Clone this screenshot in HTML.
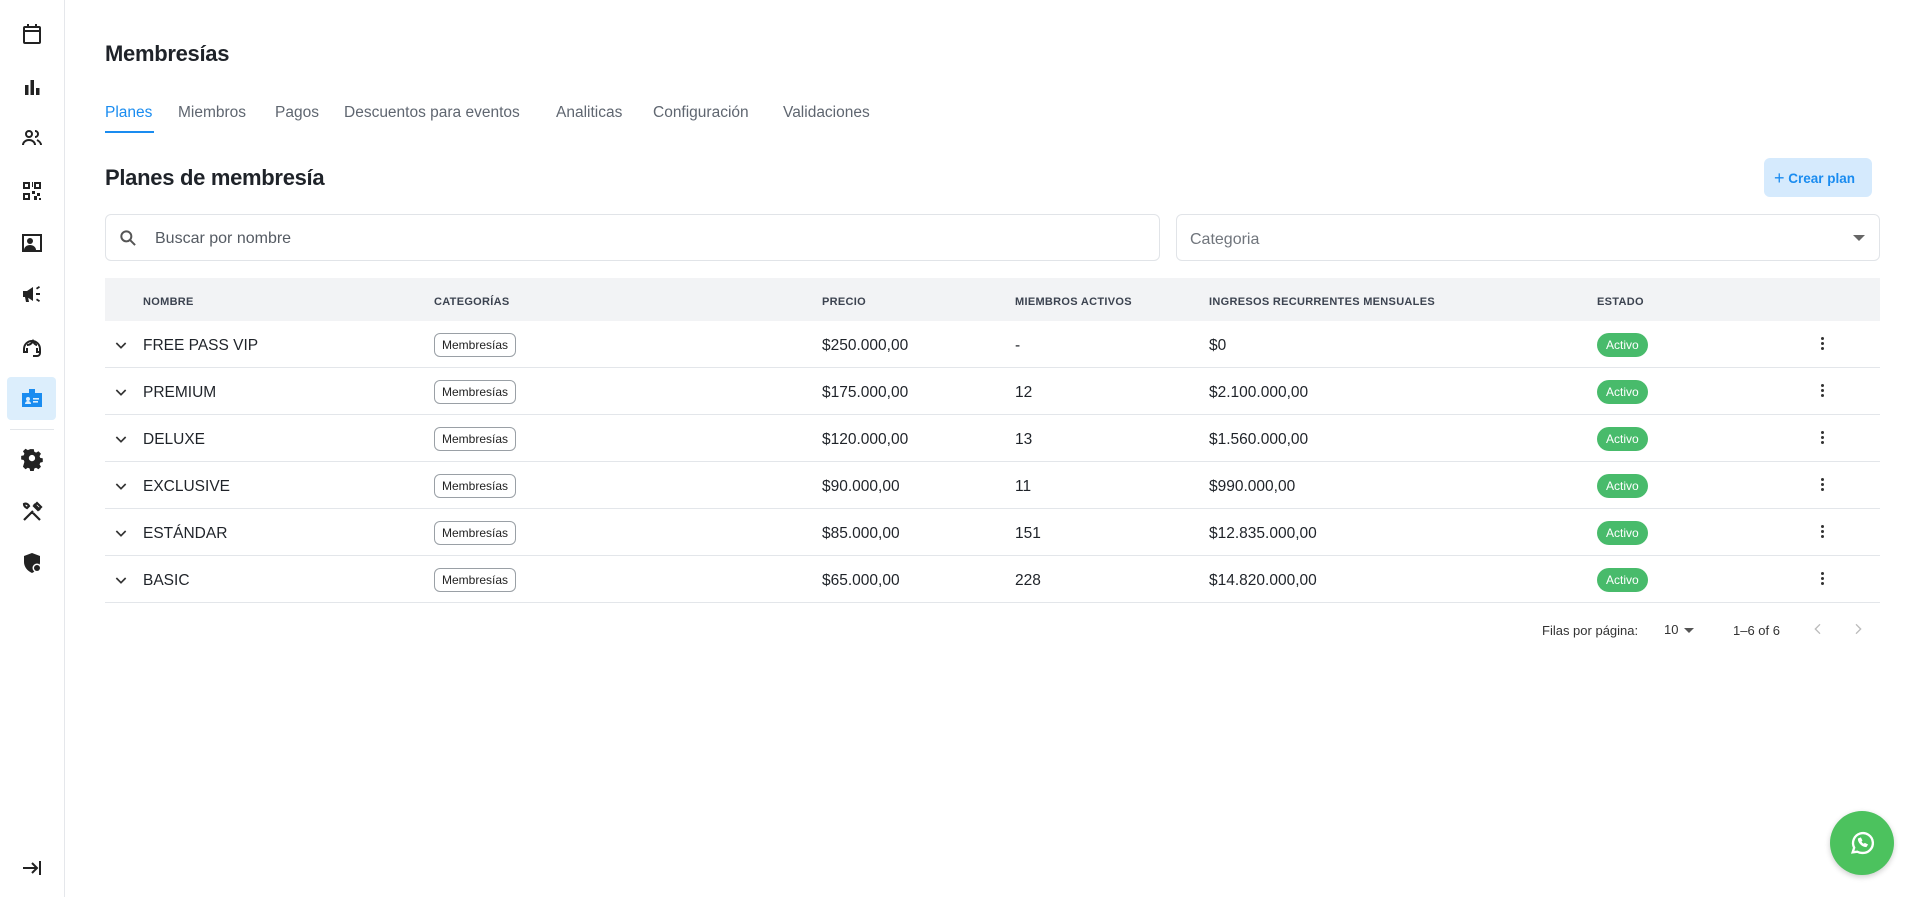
<!DOCTYPE html>
<html><head><meta charset="utf-8"><style>
*{box-sizing:border-box;margin:0;padding:0}
body{width:1915px;height:897px;background:#fff;font-family:"Liberation Sans",sans-serif;color:#1f2329;position:relative;overflow:hidden}
.side{position:absolute;left:0;top:0;width:65px;height:897px;border-right:1px solid #e5e7eb}
.ic{position:absolute;left:20px;width:24px;height:24px}
.abs{position:absolute}
.tab{position:absolute;top:104px;font-size:15.5px;color:#5f6670}
.th{position:absolute;top:296px;font-size:11px;font-weight:bold;color:#3c4350;letter-spacing:.3px}
.row{position:absolute;left:105px;width:1775px;height:47px;border-bottom:1px solid #e3e6ea;font-size:15.5px}
.row span{position:absolute;top:16px}
.chip{position:absolute;left:329px;top:12px;border:1px solid #9aa0a6;border-radius:6px;font-size:12px;padding:4px 7px;color:#222}
.act{position:absolute;left:1492px;top:12px;background:#48bb6b;color:#fff;border-radius:12px;font-size:12px;padding:5px 9px}
.dots{position:absolute;left:1716px;top:16px;width:4px}
.dots i{display:block;width:3px;height:3px;background:#333;border-radius:50%;margin-bottom:2px}
.chev{position:absolute;left:8px;top:16px}
</style></head><body>
<div class="side">
<svg class="ic" style="top:22px" viewBox="0 0 24 24" fill="none" stroke="#222" stroke-width="2"><rect x="4" y="5" width="16" height="16" rx="1"/><path d="M4 9h16M8 2v4M16 2v4"/></svg>
<svg class="ic" style="top:75px" viewBox="0 0 24 24" fill="#222"><rect x="5" y="10" width="3.5" height="10"/><rect x="10.5" y="5" width="3.5" height="15"/><rect x="16" y="13" width="3.5" height="7"/></svg>
<svg class="ic" style="top:126px" viewBox="0 0 24 24" fill="none" stroke="#222" stroke-width="2"><circle cx="9" cy="8" r="3"/><path d="M3 19c0-3 3-5 6-5s6 2 6 5M15 5a3 3 0 010 6M17 14c2 1 4 3 4 5"/></svg>
<svg class="ic" style="top:179px" viewBox="0 0 24 24" fill="#222"><path d="M3 3h7v7H3zM5 5v3h3V5zM14 3h7v7h-7zM16 5v3h3V5zM3 14h7v7H3zM5 16v3h3v-3zM12 12h3v3h-3zM17 14h3v3h-3zM14 17h3v4h-3zM19 19h2v2h-2zM12 3h1v5h-1z"/></svg>
<svg class="ic" style="top:231px" viewBox="0 0 24 24" fill="#222"><path d="M2 3h20v18H2zM4 5v14h16V5z"/><circle cx="10" cy="10" r="3"/><path d="M4 19c0-3 3-5 6-5s6 2 6 5z"/></svg>
<svg class="ic" style="top:282px" viewBox="0 0 24 24" fill="#222"><path d="M3 9h4l6-4v14l-6-4H3zM8 15l1 5h-3l-1-5z"/><path d="M16 11h4v2h-4zM16 6l3-2 1 1.5-3 2zM16 18l3 2 1-1.5-3-2z"/></svg>
<svg class="ic" style="top:335px" viewBox="0 0 24 24" fill="none" stroke="#222" stroke-width="2"><path d="M4 14a8 8 0 0116 0v4a3 3 0 01-3 3h-4M4 14v3h3v-4M20 14v3h-3v-4M7 10c3 0 5-2 6-4 1 2 2 4 4 4"/></svg>
<div class="abs" style="left:7px;top:377px;width:49px;height:43px;background:#dceefc;border-radius:4px"></div>
<svg class="ic" style="top:386px" viewBox="0 0 24 24" fill="#1a8cf0"><path d="M2 7h20v14H2zM9 3h6v5H9z"/><circle cx="8" cy="13" r="2" fill="#dceefc"/><path d="M5 18c0-2 1.5-3 3-3s3 1 3 3z" fill="#dceefc"/><rect x="13" y="12" width="6" height="1.6" fill="#dceefc"/><rect x="13" y="15" width="5" height="1.6" fill="#dceefc"/></svg>
<div class="abs" style="left:10px;top:429px;width:44px;height:1px;background:#e3e6ea"></div>
<svg class="ic" style="top:447px" viewBox="0 0 24 24" fill="#222"><path d="M12 8.5a3.5 3.5 0 100 7 3.5 3.5 0 000-7zM10 2h4l.6 3 2 1 2.6-1.6 2.8 2.8L20.4 9.8l.8 2 2.8.6v4l-2.8.6-.8 2 1.6 2.6-2.8 2.8-2.6-1.6-2 .8-.6 2.8h-4l-.6-2.8-2-.8-2.6 1.6-2.8-2.8L3.6 16.2l-.8-2L0 13.6v-4l2.8-.6.8-2L2 4.4 4.8 1.6 7.4 3.2l2-.8z" transform="scale(.9) translate(1.3 0.3)"/></svg>
<svg class="ic" style="top:500px" viewBox="0 0 24 24" fill="none" stroke="#222" stroke-width="2.2"><path d="M4 20l9-9M14 4l6 6M17 3l4 4-3 3-4-4zM20 20l-8-8M4 4c2-1 4 0 5 2l-2 2C5 7 4 6 4 4z"/></svg>
<svg class="ic" style="top:551px" viewBox="0 0 24 24" fill="#222"><path d="M12 2l8 3v6c0 5-3.5 9-8 11-4.5-2-8-6-8-11V5z"/><circle cx="17" cy="17" r="4.5" fill="#fff"/><circle cx="17" cy="17" r="3" fill="#222"/></svg>
<svg class="ic" style="top:856px" viewBox="0 0 24 24" fill="none" stroke="#222" stroke-width="2"><path d="M3 12h13M12 7l5 5-5 5M20 5v14"/></svg>
</div>

<div class="abs" style="left:105px;top:41px;font-size:22px;font-weight:bold;letter-spacing:-.3px">Membresías</div>
<div class="tab" style="left:105px;color:#1a8cf0">Planes</div>
<div class="abs" style="left:105px;top:131px;width:49px;height:2px;background:#1a8cf0"></div>
<div class="tab" style="left:178px">Miembros</div>
<div class="tab" style="left:275px">Pagos</div>
<div class="tab" style="left:344px">Descuentos para eventos</div>
<div class="tab" style="left:556px">Analiticas</div>
<div class="tab" style="left:653px">Configuración</div>
<div class="tab" style="left:783px">Validaciones</div>

<div class="abs" style="left:105px;top:165px;font-size:22px;font-weight:bold;letter-spacing:-.3px">Planes de membresía</div>
<div class="abs" style="left:1764px;top:158px;width:108px;height:39px;background:#d5eafd;border-radius:6px;color:#1a8cf0;font-size:13.5px;font-weight:bold;padding:9px 0 0 10px">
<span style="font-size:18px;font-weight:normal;position:relative;top:1px">+</span> Crear plan</div>

<div class="abs" style="left:105px;top:214px;width:1055px;height:47px;border:1px solid #e1e4e8;border-radius:6px"></div>
<svg class="abs" style="left:118px;top:228px" width="20" height="20" viewBox="0 0 24 24" fill="none" stroke="#555" stroke-width="2.4"><circle cx="10" cy="10" r="6"/><path d="M14.5 14.5l6 6"/></svg>
<div class="abs" style="left:155px;top:230px;font-size:16px;color:#555b63">Buscar por nombre</div>
<div class="abs" style="left:1176px;top:214px;width:704px;height:47px;border:1px solid #e1e4e8;border-radius:6px"></div>
<div class="abs" style="left:1190px;top:231px;font-size:16px;color:#70757c">Categoria</div>
<div class="abs" style="left:1853px;top:235px;border-left:6px solid transparent;border-right:6px solid transparent;border-top:6px solid #666"></div>

<div class="abs" style="left:105px;top:278px;width:1775px;height:43px;background:#f2f3f5"></div>
<div class="th" style="left:143px">NOMBRE</div>
<div class="th" style="left:434px">CATEGORÍAS</div>
<div class="th" style="left:822px">PRECIO</div>
<div class="th" style="left:1015px">MIEMBROS ACTIVOS</div>
<div class="th" style="left:1209px">INGRESOS RECURRENTES MENSUALES</div>
<div class="th" style="left:1597px">ESTADO</div>

<div class="row" style="top:321px"><svg class="chev" width="16" height="16" viewBox="0 0 24 24" fill="none" stroke="#333" stroke-width="2.5"><path d="M5 9l7 7 7-7"/></svg><span style="left:38px">FREE PASS VIP</span><div class="chip">Membresías</div><span style="left:717px">$250.000,00</span><span style="left:910px">-</span><span style="left:1104px">$0</span><div class="act">Activo</div><div class="dots"><i></i><i></i><i></i></div></div>
<div class="row" style="top:368px"><svg class="chev" width="16" height="16" viewBox="0 0 24 24" fill="none" stroke="#333" stroke-width="2.5"><path d="M5 9l7 7 7-7"/></svg><span style="left:38px">PREMIUM</span><div class="chip">Membresías</div><span style="left:717px">$175.000,00</span><span style="left:910px">12</span><span style="left:1104px">$2.100.000,00</span><div class="act">Activo</div><div class="dots"><i></i><i></i><i></i></div></div>
<div class="row" style="top:415px"><svg class="chev" width="16" height="16" viewBox="0 0 24 24" fill="none" stroke="#333" stroke-width="2.5"><path d="M5 9l7 7 7-7"/></svg><span style="left:38px">DELUXE</span><div class="chip">Membresías</div><span style="left:717px">$120.000,00</span><span style="left:910px">13</span><span style="left:1104px">$1.560.000,00</span><div class="act">Activo</div><div class="dots"><i></i><i></i><i></i></div></div>
<div class="row" style="top:462px"><svg class="chev" width="16" height="16" viewBox="0 0 24 24" fill="none" stroke="#333" stroke-width="2.5"><path d="M5 9l7 7 7-7"/></svg><span style="left:38px">EXCLUSIVE</span><div class="chip">Membresías</div><span style="left:717px">$90.000,00</span><span style="left:910px">11</span><span style="left:1104px">$990.000,00</span><div class="act">Activo</div><div class="dots"><i></i><i></i><i></i></div></div>
<div class="row" style="top:509px"><svg class="chev" width="16" height="16" viewBox="0 0 24 24" fill="none" stroke="#333" stroke-width="2.5"><path d="M5 9l7 7 7-7"/></svg><span style="left:38px">ESTÁNDAR</span><div class="chip">Membresías</div><span style="left:717px">$85.000,00</span><span style="left:910px">151</span><span style="left:1104px">$12.835.000,00</span><div class="act">Activo</div><div class="dots"><i></i><i></i><i></i></div></div>
<div class="row" style="top:556px"><svg class="chev" width="16" height="16" viewBox="0 0 24 24" fill="none" stroke="#333" stroke-width="2.5"><path d="M5 9l7 7 7-7"/></svg><span style="left:38px">BASIC</span><div class="chip">Membresías</div><span style="left:717px">$65.000,00</span><span style="left:910px">228</span><span style="left:1104px">$14.820.000,00</span><div class="act">Activo</div><div class="dots"><i></i><i></i><i></i></div></div>

<div class="abs" style="left:1542px;top:623px;font-size:13px;color:#333">Filas por página:</div>
<div class="abs" style="left:1664px;top:622px;font-size:13px;color:#333">10</div>
<div class="abs" style="left:1684px;top:628px;border-left:5px solid transparent;border-right:5px solid transparent;border-top:5px solid #555"></div>
<div class="abs" style="left:1733px;top:623px;font-size:13px;color:#333">1–6 of 6</div>
<svg class="abs" style="left:1810px;top:621px" width="16" height="16" viewBox="0 0 24 24" fill="none" stroke="#bbb" stroke-width="2"><path d="M15 5l-7 7 7 7"/></svg>
<svg class="abs" style="left:1850px;top:621px" width="16" height="16" viewBox="0 0 24 24" fill="none" stroke="#bbb" stroke-width="2"><path d="M9 5l7 7-7 7"/></svg>

<div class="abs" style="left:1830px;top:811px;width:64px;height:64px;border-radius:50%;background:#4cc25e;box-shadow:0 2px 6px rgba(0,0,0,.2)"></div>
<svg class="abs" style="left:1848px;top:829px" width="28" height="28" viewBox="0 0 24 24" fill="none" stroke="#fff" stroke-width="2"><path d="M4 20l1.3-4A8.5 8.5 0 1112 20.5a8.5 8.5 0 01-4-1z"/><path d="M9 8.5c0 3 3 6.5 6.5 6.5l1-1.5-2-1-1 .8c-1-.5-2-1.5-2.5-2.5l.8-1-1-2z" fill="#fff" stroke-width="1"/></svg>
</body></html>
